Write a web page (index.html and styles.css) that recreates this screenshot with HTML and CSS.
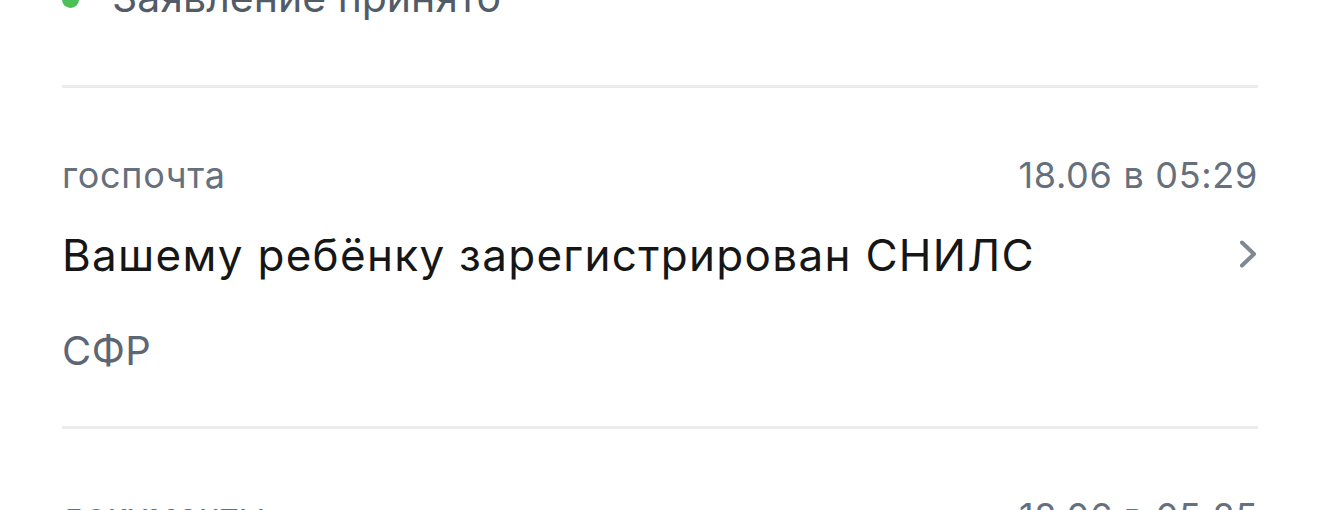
FILE: index.html
```html
<!DOCTYPE html>
<html lang="ru">
<head>
<meta charset="utf-8">
<title>Лента</title>
<link rel="stylesheet" href="styles.css">
</head>
<body>
<div class="feed">
  <div class="item item-status">
    <div class="status"><span class="dot"></span><span class="status-text">Заявление принято</span></div>
  </div>
  <div class="item">
    <div class="meta"><span class="label">госпочта</span><span class="date">18.06 в 05:29</span></div>
    <div class="title-row">
      <span class="title">Вашему ребёнку зарегистрирован СНИЛС</span>
      <svg class="chevron" width="20" height="30" viewBox="0 0 20 30" aria-hidden="true"><path d="M4 3.5 L16 15 L4 26.5" fill="none" stroke="#7f8895" stroke-width="4" stroke-linecap="round" stroke-linejoin="round"/></svg>
    </div>
    <div class="source">СФР</div>
  </div>
  <div class="item">
    <div class="meta"><span class="label">документы</span><span class="date">18.06 в 05:25</span></div>
  </div>
</div>
</body>
</html>
```
FILE: styles.css
```css
html, body {
  margin: 0;
  padding: 0;
  background: #ffffff;
  overflow: hidden;
}
body {
  font-family: Inter, "Noto Sans", sans-serif;
  -webkit-font-smoothing: antialiased;
}
.feed {
  margin-top: -27px;
  padding: 0 62px;
}
.item {
  border-top: 3px solid #ececec;
  padding: 67px 0 53px;
}
.item-status {
  border-top: none;
  padding: 0 0 64px;
}
.status {
  display: flex;
  align-items: center;
  gap: 33px;
  line-height: 48px;
  font-size: 41px;
  color: #525b68;
}
.dot {
  width: 17px;
  height: 17px;
  border-radius: 50%;
  background: #4cbf56;
  flex: none;
  margin-top: 4px;
}
.meta {
  display: flex;
  justify-content: space-between;
  font-size: 36px;
  letter-spacing: 0.7px;
  line-height: 40px;
  color: #66707d;
}
.title-row {
  display: flex;
  align-items: center;
  justify-content: space-between;
  margin-top: 36px;
}
.title {
  font-size: 44px;
  letter-spacing: 1.3px;
  line-height: 48px;
  color: #161616;
}
.chevron {
  flex: none;
  margin-top: -2px;
}
.source {
  margin-top: 50px;
  font-size: 40px;
  letter-spacing: 0.5px;
  line-height: 44px;
  color: #5c6674;
}
```
